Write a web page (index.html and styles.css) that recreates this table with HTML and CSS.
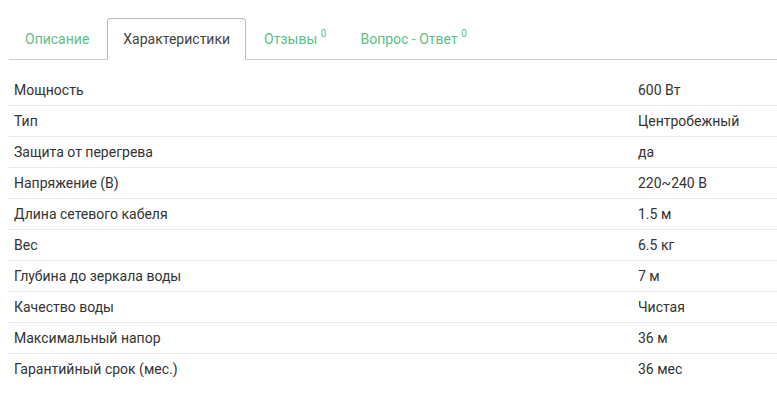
FILE: index.html
```html
<!DOCTYPE html>
<html lang="ru">
<head>
<meta charset="utf-8">
<link rel="stylesheet" href="styles.css">
</head>
<body>
<div class="page">
  <ul class="tabs">
    <li class="tab">Описание</li>
    <li class="tab active">Характеристики</li>
    <li class="tab">Отзывы <sup>0</sup></li>
    <li class="tab">Вопрос - Ответ <sup>0</sup></li>
  </ul>
  <div class="specs">
    <div class="row"><div class="name">Мощность</div><div class="val">600 Вт</div></div>
    <div class="row"><div class="name">Тип</div><div class="val">Центробежный</div></div>
    <div class="row"><div class="name">Защита от перегрева</div><div class="val">да</div></div>
    <div class="row"><div class="name">Напряжение (В)</div><div class="val">220~240 В</div></div>
    <div class="row"><div class="name">Длина сетевого кабеля</div><div class="val">1.5 м</div></div>
    <div class="row"><div class="name">Вес</div><div class="val">6.5 кг</div></div>
    <div class="row"><div class="name">Глубина до зеркала воды</div><div class="val">7 м</div></div>
    <div class="row"><div class="name">Качество воды</div><div class="val">Чистая</div></div>
    <div class="row"><div class="name">Максимальный напор</div><div class="val">36 м</div></div>
    <div class="row"><div class="name">Гарантийный срок (мес.)</div><div class="val">36 мес</div></div>
  </div>
</div>
</body>
</html>
```
FILE: styles.css
```css
html, body {
  margin: 0;
  padding: 0;
  background: #fff;
}
body {
  font-family: Roboto, "Liberation Sans", sans-serif;
  font-size: 14px;
  color: #333;
}
.page {
  padding: 18px 0 0 9px;
}
.tabs {
  list-style: none;
  margin: 0;
  padding: 0;
  display: flex;
  border-bottom: 1px solid #ccc;
}
.tab {
  padding: 10px 15px;
  line-height: 20px;
  font-size: 14px;
  color: #5bbf87;
  border: 1px solid transparent;
  border-radius: 4px 4px 0 0;
  margin: 0 2px -1px 0;
}
.tab sup {
  font-size: 10px;
  line-height: 0;
  vertical-align: 7px;
}
.tab.active {
  color: #444;
  border-color: #bbb #bbb #fff;
  background: #fff;
}
.specs {
  margin-top: 14px;
}
.row {
  display: grid;
  grid-template-columns: 624px 1fr;
  height: 30px;
  align-items: center;
  border-top: 1px solid #e8e8e8;
}
.row:first-child {
  border-top-color: transparent;
}
.name, .val {
  padding: 0 5px;
}
.val {
  padding-bottom: 1px;
}
.name {
  padding-bottom: 1px;
}
```
